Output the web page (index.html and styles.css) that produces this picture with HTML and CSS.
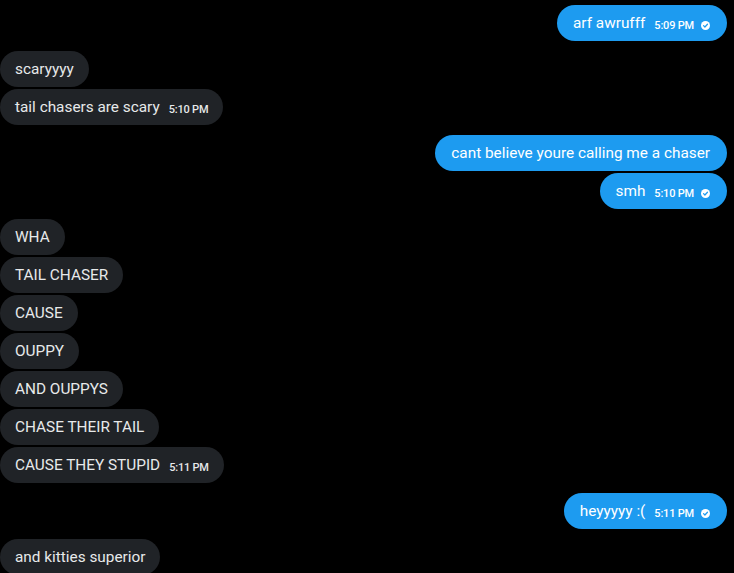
FILE: index.html
```html
<!DOCTYPE html>
<html>
<head>
<meta charset="utf-8">
<link rel="stylesheet" href="styles.css">
</head>
<body>
<div class="chat">
  <div class="group out">
    <div class="msg">arf awrufff<span class="meta">5:09 PM<svg class="seen" viewBox="0 0 12 12"><circle cx="6" cy="6" r="6" fill="#fff"/><path d="M3.4 6.2l1.8 1.8 3.4-3.6" fill="none" stroke="#1d9bf0" stroke-width="1.7" stroke-linecap="round" stroke-linejoin="round"/></svg></span></div>
  </div>
  <div class="group in">
    <div class="msg">scaryyyy</div>
    <div class="msg">tail chasers are scary<span class="meta">5:10 PM</span></div>
  </div>
  <div class="group out">
    <div class="msg">cant believe youre calling me a chaser</div>
    <div class="msg">smh<span class="meta">5:10 PM<svg class="seen" viewBox="0 0 12 12"><circle cx="6" cy="6" r="6" fill="#fff"/><path d="M3.4 6.2l1.8 1.8 3.4-3.6" fill="none" stroke="#1d9bf0" stroke-width="1.7" stroke-linecap="round" stroke-linejoin="round"/></svg></span></div>
  </div>
  <div class="group in">
    <div class="msg">WHA</div>
    <div class="msg">TAIL CHASER</div>
    <div class="msg">CAUSE</div>
    <div class="msg">OUPPY</div>
    <div class="msg">AND OUPPYS</div>
    <div class="msg">CHASE THEIR TAIL</div>
    <div class="msg">CAUSE THEY STUPID<span class="meta">5:11 PM</span></div>
  </div>
  <div class="group out">
    <div class="msg">heyyyyy :(<span class="meta">5:11 PM<svg class="seen" viewBox="0 0 12 12"><circle cx="6" cy="6" r="6" fill="#fff"/><path d="M3.4 6.2l1.8 1.8 3.4-3.6" fill="none" stroke="#1d9bf0" stroke-width="1.7" stroke-linecap="round" stroke-linejoin="round"/></svg></span></div>
  </div>
  <div class="group in">
    <div class="msg">and kitties superior</div>
  </div>
</div>
</body>
</html>
```

FILE: styles.css
```css
html, body {
  margin: 0;
  background: #000;
}
body {
  font-family: Roboto, "Liberation Sans", Arial, sans-serif;
  font-size: 15.35px;
  overflow: hidden;
}
.chat {
  display: flex;
  flex-direction: column;
  gap: 10px;
  padding: 5px 7px 0 0;
}
.group {
  display: flex;
  flex-direction: column;
  gap: 2px;
}
.group.out { align-items: flex-end; }
.group.in { align-items: flex-start; }
.msg {
  height: 36px;
  box-sizing: border-box;
  padding: 0 15px;
  border-radius: 18px;
  display: flex;
  align-items: baseline;
  line-height: 36px;
  white-space: nowrap;
}
.out .msg {
  background: #1d9bf0;
  color: #fff;
  padding-right: 17px;
  padding-left: 16px;
}
.in .msg {
  background: #202327;
  color: #e7e9ea;
}
.meta {
  font-size: 11px;
  font-weight: 500;
  letter-spacing: -0.2px;
  margin-left: 9px;
  display: inline-flex;
  align-items: center;
  line-height: 11px;
  position: relative;
  top: 1px;
}
.seen {
  width: 9px;
  height: 9px;
  margin-left: 7px;
}
```
